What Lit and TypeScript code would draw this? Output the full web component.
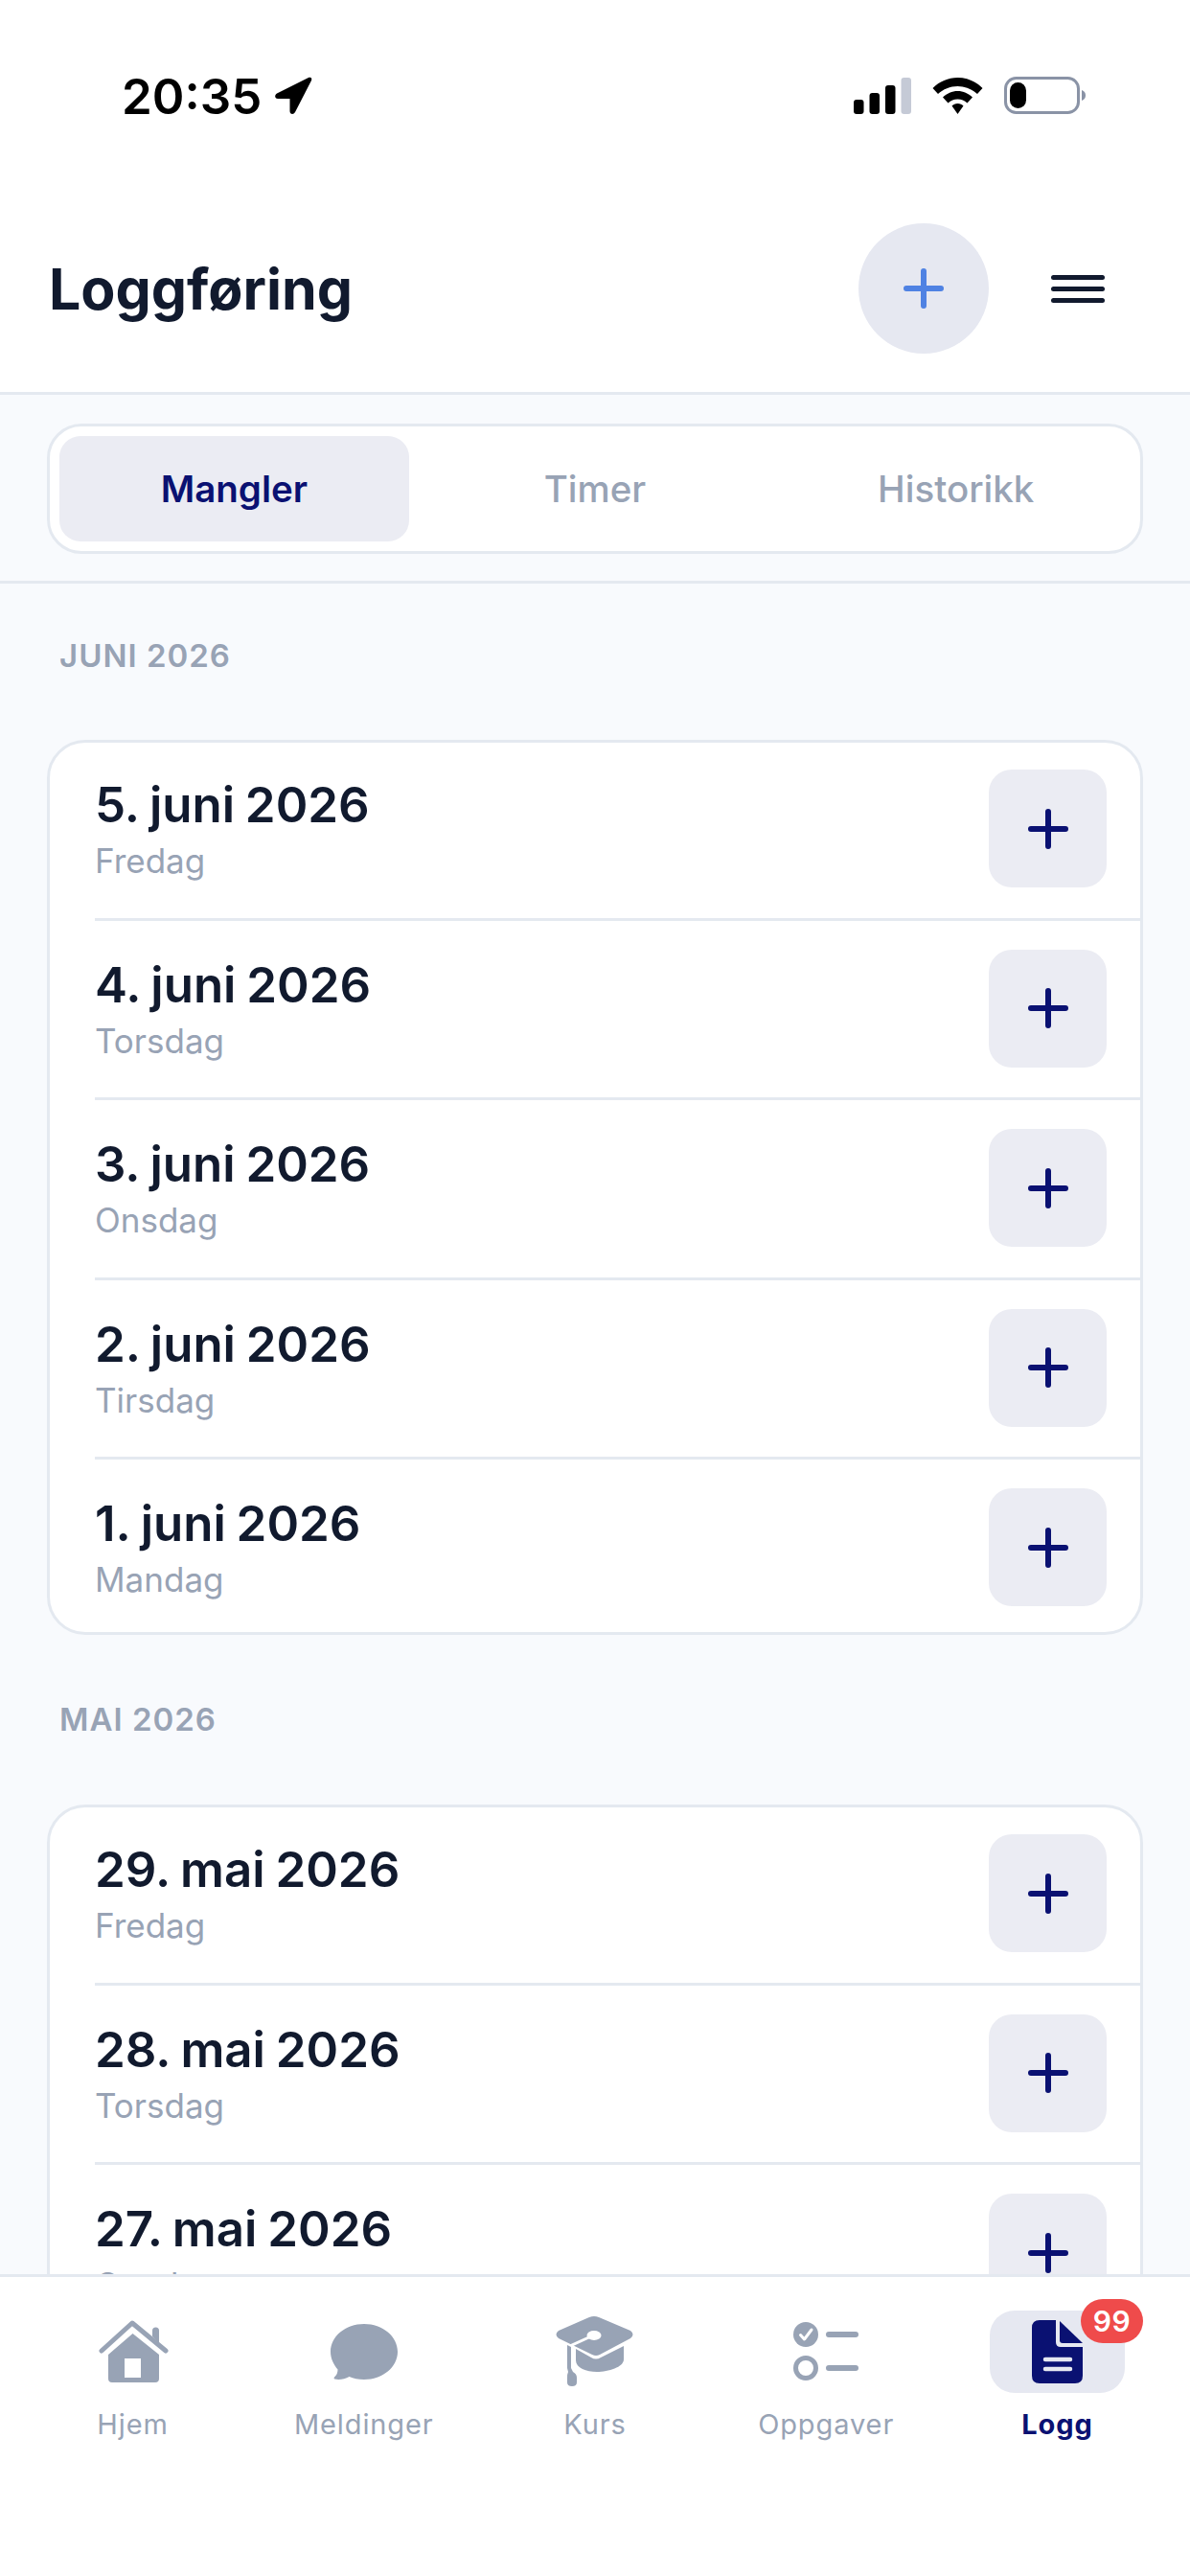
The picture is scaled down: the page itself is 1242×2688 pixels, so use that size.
import { css, html, LitElement, svg } from "lit";
import { customElement } from "lit/decorators.js";

const months = [
  {
    label: "JUNI 2026",
    days: [
      ["5. juni 2026", "Fredag"],
      ["4. juni 2026", "Torsdag"],
      ["3. juni 2026", "Onsdag"],
      ["2. juni 2026", "Tirsdag"],
      ["1. juni 2026", "Mandag"],
    ],
  },
  {
    label: "MAI 2026",
    days: [
      ["29. mai 2026", "Fredag"],
      ["28. mai 2026", "Torsdag"],
      ["27. mai 2026", "Onsdag"],
    ],
  },
];

const plus = html`
  <svg width="44" height="44" viewBox="0 0 44 44">
    <path
      d="M22 4V40M4 22H40"
      fill="none"
      stroke="currentColor"
      stroke-width="6"
      stroke-linecap="round"
    />
  </svg>
`;

const icons = {
  home: svg`<path d="M4 32 36 3 71 32" fill="none" stroke="#98a3b5" stroke-width="5" stroke-linecap="round" stroke-linejoin="round"/>
    <path d="M57 17V11a3.500 3.500 0 0 1 7 0V24Z" fill="#98a3b5"/>
    <path fill-rule="evenodd" d="M36.500 14 64 36V61a4 4 0 0 1-4 4H15a4 4 0 0 1-4-4V36ZM28 40V60H45V40Z" fill="#98a3b5"/>`,
  chat: svg`<path d="M35 0C54.500 0 70 13 70 29S54.500 58 35 58C29 58 24 57 19.500 55C15 57.500 9 58.500 4.500 57.500C3.500 57.300 3.300 56.200 4 55.500C6.500 53.500 7.500 50.500 7.500 47.500C3 42 0 36 0 29C0 13 15.500 0 35 0Z" fill="#98a3b5"/>`,
  cap: svg`<path d="M36 2Q41 0 46 2L79 16Q84 20 79 24L47 41Q43 43 39 41L4 24Q-1 20 4 16Z" fill="#98a3b5"/>
    <ellipse cx="41" cy="21" rx="7.500" ry="5" fill="#fff"/>
    <path d="M40 21 16 32 18 36" fill="none" stroke="#fff" stroke-width="3"/>
    <path d="M22 35 38 44Q43 47 48 44L72 32V46C72 54 56 59 44 59 33 59 22 55 22 47Z" fill="#98a3b5"/>
    <path d="M13 31 17 33V55L19 59Q23 61 23 65V70Q23 74 18 74 13 74 13 70V65Q13 61 14 59L13 55Z" fill="#98a3b5"/>`,
  tasks: svg`<circle cx="13" cy="13" r="13" fill="#98a3b5"/>
    <path d="M7.500 13.500 11.500 18 19 8" fill="none" stroke="#fff" stroke-width="3" stroke-linecap="round" stroke-linejoin="round"/>
    <circle cx="13" cy="48" r="10.500" fill="none" stroke="#98a3b5" stroke-width="5"/>
    <path d="M37 13H65M37 48H65" fill="none" stroke="#98a3b5" stroke-width="6" stroke-linecap="round"/>`,
  doc: svg`<path d="M8 0H25V23Q25 28 30 28H53V58Q53 66 45 66H8Q0 66 0 58V8Q0 0 8 0Z" fill="#0a1172"/>
    <path d="M29 1 53 24H32Q29 24 29 21Z" fill="#0a1172"/>
    <path d="M14 41H40M14 51H40" fill="none" stroke="#e6e8f1" stroke-width="4.500" stroke-linecap="round"/>`,
};

const tabs = [
  { label: "Hjem", icon: icons.home, w: 74, h: 66 },
  { label: "Meldinger", icon: icons.chat, w: 70, h: 58 },
  { label: "Kurs", icon: icons.cap, w: 84, h: 76 },
  { label: "Oppgaver", icon: icons.tasks, w: 68, h: 62 },
];

@customElement("app-root")
export class AppRoot extends LitElement {
  static styles = css`
    :host {
      display: flex;
      flex-direction: column;
      width: 1242px;
      height: 2688px;
      overflow: hidden;
      background: #f8fafd;
      font-family: Inter, "Noto Sans", sans-serif;
    }

    .top {
      background: #fff;
      border-bottom: 3px solid #e4e9f0;
      flex: none;
    }

    .status {
      display: flex;
      align-items: center;
      justify-content: space-between;
      height: 200px;
      padding: 0 109px 0 127px;
      box-sizing: border-box;
      color: #000;
    }

    .time {
      display: flex;
      align-items: center;
      gap: 13px;
      font-size: 51px;
      font-weight: 600;
      line-height: 1;
    }

    .indicators {
      display: flex;
      align-items: center;
      gap: 22px;
    }

    .title-row {
      display: flex;
      align-items: center;
      height: 136px;
      padding: 33px 89px 40px 51px;
    }

    h1 {
      flex: 1;
      margin: 0;
      font-size: 59px;
      font-weight: 700;
      color: #111a2e;
    }

    .add {
      display: flex;
      align-items: center;
      justify-content: center;
      width: 136px;
      height: 136px;
      border-radius: 50%;
      background: #e6e8f1;
      color: #4f82e3;
    }

    .menu {
      display: flex;
      flex-direction: column;
      gap: 7px;
      width: 56px;
      margin-left: 65px;
    }

    .menu i {
      height: 5px;
      border-radius: 3px;
      background: #111a2e;
    }

    .segment-wrap {
      flex: none;
      padding: 30px 49px 28px;
      border-bottom: 3px solid #e4e9f0;
    }

    .segment {
      display: grid;
      grid-template-columns: repeat(3, 1fr);
      gap: 12px;
      padding: 10px;
      border: 3px solid #e4e9f0;
      border-radius: 36px;
      background: #fff;
    }

    .segment div {
      display: flex;
      align-items: center;
      justify-content: center;
      height: 110px;
      border-radius: 22px;
      font-size: 38.5px;
      font-weight: 500;
      color: #98a3b5;
    }

    .segment .active {
      background: #ebecf3;
      color: #0a1172;
      font-weight: 600;
    }

    .list {
      flex: 1;
      min-height: 0;
      overflow: hidden;
      padding: 0 49px;
    }

    .month {
      padding: 68px 13px 69px;
      font-size: 33px;
      font-weight: 600;
      line-height: 40px;
      letter-spacing: 1px;
      color: #98a3b5;
    }

    .month.first {
      padding-top: 55px;
      padding-bottom: 68px;
    }

    .card {
      border: 3px solid #e4e9f0;
      border-radius: 40px;
      background: #fff;
    }

    .row {
      display: flex;
      align-items: center;
      justify-content: space-between;
      margin-left: 47px;
      padding: 30px 35px 31.5px 0;
      border-bottom: 3px solid #e4e9f0;
    }

    .row:first-child {
      padding-top: 28px;
    }

    .row:last-child {
      border-bottom: none;
      padding-bottom: 27px;
    }

    .day {
      font-size: 51px;
      font-weight: 600;
      line-height: 62px;
      word-spacing: -2px;
      color: #111a2e;
    }

    .weekday {
      margin-top: 5px;
      font-size: 35px;
      line-height: 44px;
      color: #98a3b5;
    }

    .row-add {
      display: flex;
      align-items: center;
      justify-content: center;
      width: 123px;
      height: 123px;
      border-radius: 24px;
      background: #ebecf3;
      color: #0a1172;
    }

    nav {
      flex: none;
      display: grid;
      grid-template-columns: repeat(5, 1fr);
      height: 315px;
      box-sizing: border-box;
      padding: 35px 18px 0;
      background: #fff;
      border-top: 3px solid #e4e9f0;
    }

    .tab {
      display: flex;
      flex-direction: column;
      align-items: center;
      font-size: 29px;
      line-height: 34px;
      letter-spacing: 0.9px;
      color: #98a3b5;
    }

    .tab-icon {
      position: relative;
      display: flex;
      align-items: center;
      justify-content: center;
      width: 141px;
      height: 86px;
      margin-bottom: 16px;
      border-radius: 26px;
    }

    .tab.active {
      color: #0a1172;
      font-weight: 700;
    }

    .tab.active .tab-icon {
      background: #e6e8f1;
    }

    .badge {
      position: absolute;
      top: -12px;
      right: -19px;
      display: flex;
      align-items: center;
      justify-content: center;
      width: 65px;
      height: 46px;
      border-radius: 23px;
      background: #ef4b4b;
      color: #fff;
      font-size: 30px;
      font-weight: 600;
      letter-spacing: 0.5px;
    }
  `;

  render() {
    return html`
      <div class="top">
        <div class="status">
          <div class="time">
            20:35
            <svg width="40" height="40" viewBox="0 0 40 40">
              <path
                d="M36 1 3 17.500C0 19.500 1 23 4 23H16.500V36C16.500 39.500 20.500 40 22 37L39 4C40 1.500 38.500 0 36 1Z"
                fill="#000"
              />
            </svg>
          </div>
          <div class="indicators">
            <svg width="60" height="38" viewBox="0 0 60 38">
              <rect x="0" y="23" width="10.500" height="15" rx="3" fill="#000" />
              <rect x="16.500" y="16" width="10.500" height="22" rx="3" fill="#000" />
              <rect x="33" y="8" width="10.500" height="30" rx="3" fill="#000" />
              <rect x="49.500" y="0" width="10.500" height="38" rx="3" fill="#c5cad6" />
            </svg>
            <svg width="53" height="38" viewBox="0 0 52 38">
              <path
                d="M26 0C36 0 45 4 52 11L46.500 17C41 12 34 9 26 9S11 12 5.500 17L0 11C7 4 16 0 26 0Z"
                fill="#000"
              />
              <path
                d="M26 14C32 14 37 16.500 41.500 20.500L36 26.500C33 24 30 22.500 26 22.500S19 24 16 26.500L10.500 20.500C15 16.500 20 14 26 14Z"
                fill="#000"
              />
              <path d="M26 27C28.500 27 30.500 28 32 29.500L26 38 20 29.500C21.500 28 23.500 27 26 27Z" fill="#000" />
            </svg>
            <svg width="85" height="40" viewBox="0 0 85 40">
              <rect x="1.500" y="1.500" width="76" height="36" rx="11" fill="none" stroke="#8a93a6" stroke-width="3" />
              <rect x="6" y="6" width="17" height="27" rx="8.500" fill="#000" />
              <path d="M81 14C84 15 85 17 85 19.500S84 24 81 25Z" fill="#8a93a6" />
            </svg>
          </div>
        </div>
        <div class="title-row">
          <h1>Loggføring</h1>
          <div class="add">${plus}</div>
          <div class="menu"><i></i><i></i><i></i></div>
        </div>
      </div>

      <div class="segment-wrap">
        <div class="segment">
          <div class="active">Mangler</div>
          <div>Timer</div>
          <div>Historikk</div>
        </div>
      </div>

      <div class="list">
        ${months.map(
          (month, i) => html`
            <div class="month ${i === 0 ? "first" : ""}">${month.label}</div>
            <div class="card">
              ${month.days.map(
                ([day, weekday]) => html`
                  <div class="row">
                    <div>
                      <div class="day">${day}</div>
                      <div class="weekday">${weekday}</div>
                    </div>
                    <div class="row-add">${plus}</div>
                  </div>
                `,
              )}
            </div>
          `,
        )}
      </div>

      <nav>
        ${tabs.map(
          (tab) => html`
            <div class="tab">
              <div class="tab-icon">
                <svg width="${tab.w}" height="${tab.h}" viewBox="0 0 ${tab.w} ${tab.h}">${tab.icon}</svg>
              </div>
              ${tab.label}
            </div>
          `,
        )}
        <div class="tab active">
          <div class="tab-icon">
            <svg width="53" height="66" viewBox="0 0 53 66">${icons.doc}</svg>
            <span class="badge">99</span>
          </div>
          Logg
        </div>
      </nav>
    `;
  }
}
